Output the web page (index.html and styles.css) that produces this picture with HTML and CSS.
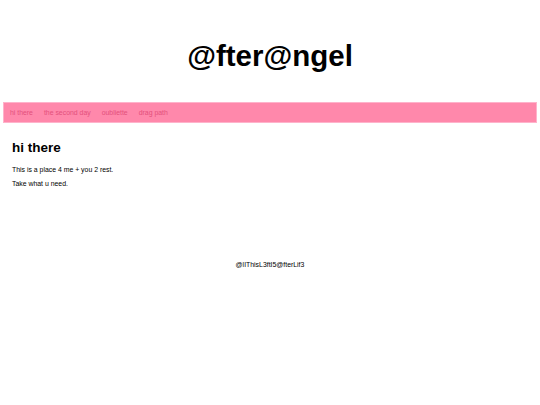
FILE: index.html
```html
<!DOCTYPE html>
<html>
<head>
<meta charset="utf-8">
<title>@fter@ngel</title>
<link rel="stylesheet" href="styles.css">
</head>
<body>
<header class="masthead">
  <h1 class="site-title">@fter@ngel</h1>
</header>
<nav class="navbar">
  <a class="nav-link" href="#">hi there</a>
  <a class="nav-link" href="#">the second day</a>
  <a class="nav-link" href="#">oubliette</a>
  <a class="nav-link" href="#">drag path</a>
</nav>
<main class="content">
  <h2 class="page-title">hi there</h2>
  <p class="text">This is a place 4 me + you 2 rest.</p>
  <p class="text">Take what u need.</p>
</main>
<footer class="footer">@lIThisL3ftI5@fterLif3</footer>
</body>
</html>
```

FILE: styles.css
```css
html, body {
  background: #ffffff;
}
body {
  margin: 3.4px;
  font-family: "Liberation Sans", Arial, sans-serif;
  color: #000;
}
.masthead {
  height: 98.6px;
  display: flex;
  align-items: center;
  justify-content: center;
}
.site-title {
  margin: 0;
  font-size: 29.5px;
  font-weight: bold;
  line-height: 1;
  padding-top: 7px;
}
.navbar {
  display: flex;
  align-items: center;
  height: 19px;
  background: #ff88ab;
  border: 1px solid #ffb3cb;
  padding: 0 2.4px;
}
.nav-link {
  font-size: 6.9px;
  color: #e4507c;
  text-decoration: none;
  padding: 0 3.2px;
}
.nav-link + .nav-link {
  margin-left: 4.6px;
}
.content {
  padding: 11px 8.6px 0;
}
.page-title {
  margin: 6px 0 11px;
  font-size: 13.5px;
  font-weight: bold;
}
.text {
  margin: 6.75px 0;
  font-size: 6.9px;
}
.footer {
  margin-top: 74px;
  text-align: center;
  font-size: 6.9px;
}
```
